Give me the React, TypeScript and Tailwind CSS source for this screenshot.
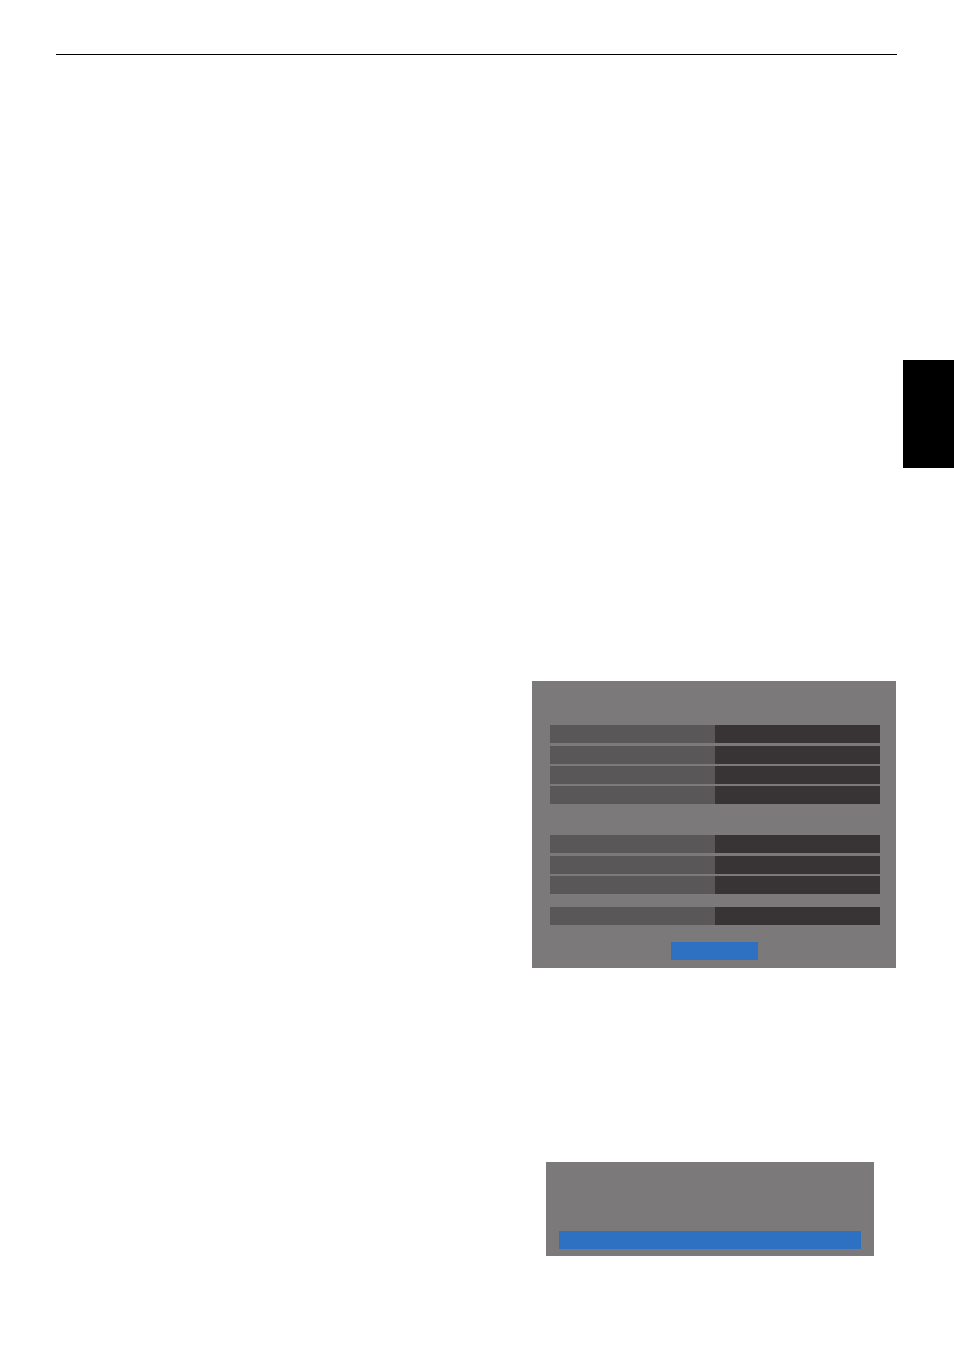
export default function App() {
  const row = (mt: string) => (
    <div className={`flex h-[18px] ${mt}`}>
      <div className="w-[165px] bg-[#595757]" />
      <div className="w-[165px] bg-[#383435]" />
    </div>
  );

  return (
    <div className="w-[954px] h-[1351px] bg-white overflow-hidden font-['Liberation_Sans',sans-serif]">
      {/* header rule */}
      <div className="pt-[54px] pl-[56px]">
        <div className="w-[841px] h-px bg-black" />
      </div>

      {/* side tab */}
      <div className="mt-[305px] ml-[903px] w-[51px] h-[108px] bg-black" />

      {/* settings panel */}
      <div className="mt-[213px] ml-[532px] w-[364px] h-[287px] bg-[#7b7979] pt-[44px] pl-[18px]">
        {row('')}
        {row('mt-[3px]')}
        {row('mt-[2px]')}
        {row('mt-[2px]')}
        {row('mt-[31px]')}
        {row('mt-[3px]')}
        {row('mt-[2px]')}
        {row('mt-[13px]')}
        <div className="mt-[17px] ml-[121px] w-[87px] h-[18px] bg-[#2e70c1]" />
      </div>

      {/* confirmation panel */}
      <div className="mt-[194px] ml-[546px] w-[328px] h-[94px] bg-[#7b7979] pt-[69px] pl-[13px]">
        <div className="w-[302px] h-[18px] bg-[#2e70c1]" />
      </div>
    </div>
  );
}
